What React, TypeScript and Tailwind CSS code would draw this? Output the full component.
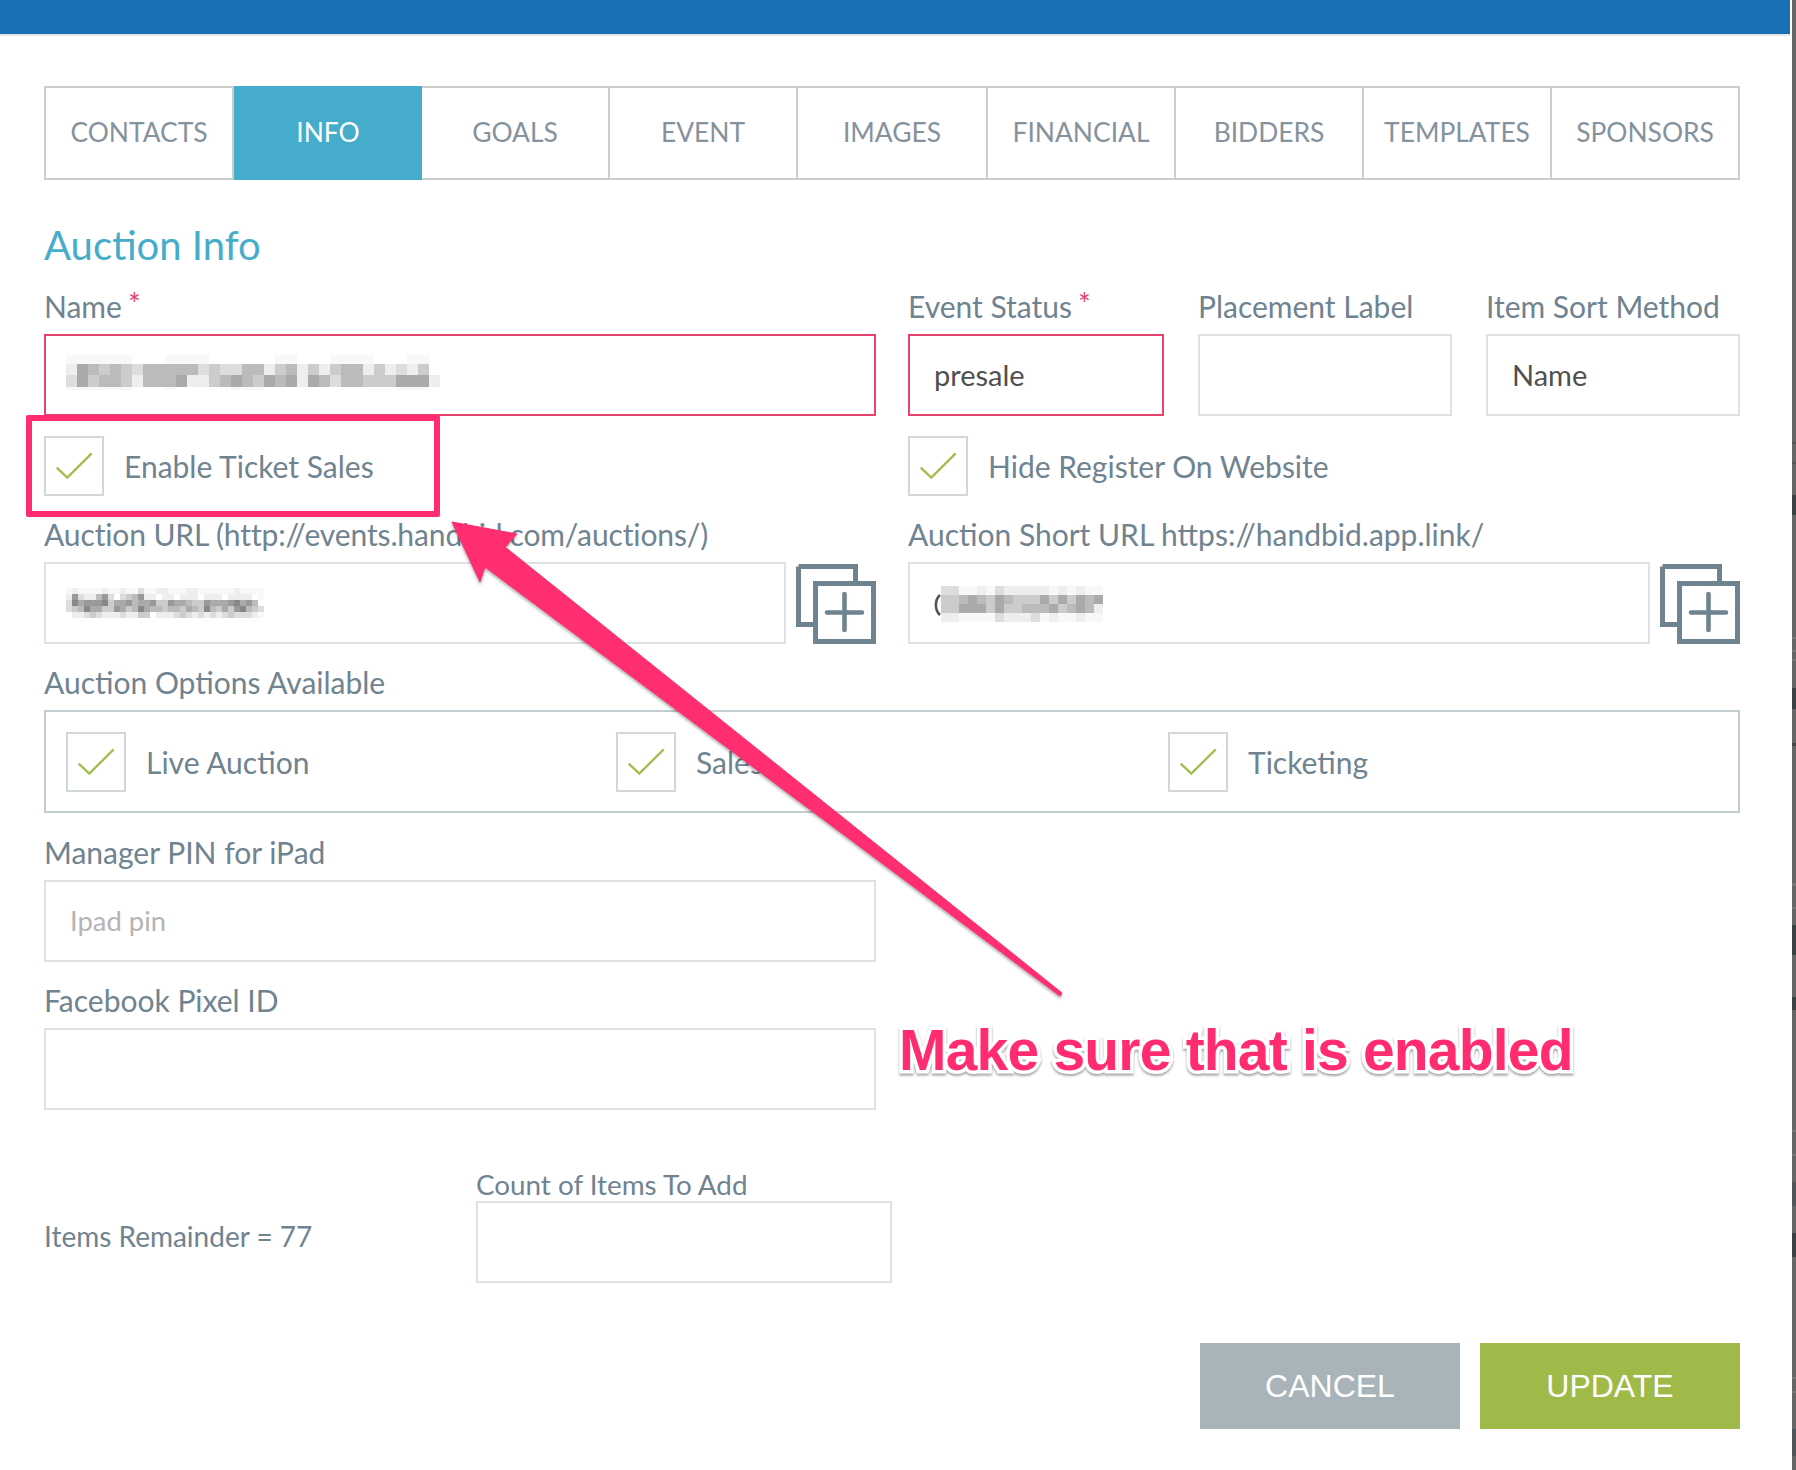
import React from "react";

const tabs = ["CONTACTS", "INFO", "GOALS", "EVENT", "IMAGES", "FINANCIAL", "BIDDERS", "TEMPLATES", "SPONSORS"];

const stripMarks: [number, number, string][] = [
  [442, 2, "#555"], [462, 2, "#555"], [495, 20, "#3c4144"], [637, 2, "#777"], [650, 2, "#777"], [659, 2, "#777"],
  [688, 21, "#3c4144"], [743, 3, "#444"], [883, 3, "#777"], [907, 2, "#777"], [925, 30, "#3c4144"], [997, 13, "#3c4144"],
  [1130, 2, "#777"], [1154, 2, "#777"], [1182, 24, "#50565a"], [1233, 24, "#3c4144"], [1377, 2, "#777"], [1391, 2, "#777"],
  [1429, 27, "#50565a"],
];

function Pixels({ rows, cw, ch, heights }: { rows: string[]; cw: number; ch: number; heights?: number[] }) {
  const width = rows[0].length * cw;
  let y = 0;
  const cells: React.ReactNode[] = [];
  rows.forEach((row, r) => {
    const h = heights ? heights[r] : ch;
    row.split("").forEach((d, c) => {
      const v = d === "z" ? 248 : parseInt(d, 16) * 17;
      if (v < 255) cells.push(<rect key={`${r}-${c}`} x={c * cw} y={y} width={cw} height={h} fill={`rgb(${v},${v},${v})`} />);
    });
    y += h;
  });
  return (
    <svg width={width} height={y} viewBox={`0 0 ${width} ${y}`} shapeRendering="crispEdges" className="block">
      {cells}
    </svg>
  );
}

function Label({ children, req, className = "" }: { children: React.ReactNode; req?: boolean; className?: string }) {
  return (
    <div className={`h-[44px] text-[30px] leading-[32px] text-[#6f8390] whitespace-nowrap ${className}`}>
      {children}
      {req && <span className="relative -top-[3px] ml-[6px] text-[#e8426f] text-[30px] leading-none">*</span>}
    </div>
  );
}

function Field({ value, placeholder, error, size = "text-[29px]", className = "" }: { value?: string; placeholder?: string; error?: boolean; size?: string; className?: string }) {
  return (
    <input
      readOnly
      defaultValue={value}
      placeholder={placeholder}
      className={`block h-[82px] w-full bg-white border-2 pl-[24px] pb-[2px] ${size} text-[#505050] placeholder:text-[#b4b4b4] outline-none ${error ? "border-[#e8426f]" : "border-[#dde1e5]"} ${className}`}
    />
  );
}

function Check({ label }: { label: string }) {
  return (
    <div className="flex items-center gap-[20px] h-[60px]">
      <div className="w-[60px] h-[60px] border-2 border-[#d2d7db] shrink-0">
        <svg width="56" height="56" viewBox="0 0 56 56" className="block">
          <path d="M10.7 29.7 L21.3 39.7 L45.7 15.3" fill="none" stroke="#a3bd52" strokeWidth="2.4" />
        </svg>
      </div>
      <span className="text-[30px] text-[#6f8390] whitespace-nowrap">{label}</span>
    </div>
  );
}

function CopyIcon() {
  return (
    <svg width="80" height="80" viewBox="0 0 80 80" className="block shrink-0">
      <path d="M2.5 2.5 H59.5 V19 M19 60.5 H2.5 V2.5" fill="none" stroke="#6f8390" strokeWidth="5" />
      <rect x="19.5" y="19.5" width="58" height="58" fill="white" stroke="#6f8390" strokeWidth="5" />
      <path d="M48.5 30 V66 M31 48.5 H66" stroke="#6f8390" strokeWidth="4.6" strokeLinecap="round" />
    </svg>
  );
}

export default function App() {
  return (
    <div className="relative w-[1796px] h-[1470px] bg-white flex overflow-hidden font-['Lato',sans-serif]">
      <div className="w-[1790px] shrink-0">
        <div className="h-[36px] bg-[#1a70b3] border-b-2 border-[#e4e6e8]" />
        <div className="pl-[44px] pr-[50px] pt-[50px]">
          <div className="grid grid-cols-[190px_188px_188px_188px_190px_188px_188px_188px_188px] h-[94px]">
            {tabs.map((t, i) => (
              <div
                key={t}
                className={`flex items-center justify-center text-[26.4px] ${
                  t === "INFO"
                    ? "bg-[#45adcb] text-white"
                    : `border-y-2 border-[#cccccc] text-[#84929e] ${i === 0 || i > 1 ? "border-r-2" : ""} ${i === 0 ? "border-l-2" : ""}`
                }`}
              >
                {t}
              </div>
            ))}
          </div>

          <h1 className="mt-[41px] h-[48px] text-[40px] leading-[48px] font-normal text-[#45adcb]">Auction Info</h1>

          <div className="mt-[21px] grid grid-cols-[832px_832px] gap-x-[32px]">
            <div>
              <Label req>Name</Label>
              <div className="h-[82px] border-2 border-[#e8426f] pl-[20px] pt-[19px]">
                <Pixels
                  cw={11}
                  ch={11}
                  heights={[9, 11, 12, 3]}
                  rows={[
                    "zzzzzzfffzzzzffffffzzfffzzzzfffzzf",
                    "eabcbcdbbbbbdcddbbecbececbbecedecf",
                    "dacbbcebbbaeecbabcabaeabdbbcccaaae",
                    "zzzzzzfffzfffffzzzffffffffffffzzzf",
                  ]}
                />
              </div>
            </div>
            <div className="grid grid-cols-[256px_254px_254px] gap-x-[34px]">
              <div>
                <Label req>Event Status</Label>
                <Field value="presale" error />
              </div>
              <div>
                <Label>Placement Label</Label>
                <Field />
              </div>
              <div>
                <Label>Item Sort Method</Label>
                <Field value="Name" />
              </div>
            </div>
          </div>

          <div className="mt-[20px] grid grid-cols-[832px_832px] gap-x-[32px]">
            <Check label="Enable Ticket Sales" />
            <Check label="Hide Register On Website" />
          </div>

          <div className="mt-[23px] grid grid-cols-[832px_832px] gap-x-[32px]">
            <div>
              <div className="h-[43px] text-[30px] leading-[31px] tracking-[-0.12px] text-[#6f8390] whitespace-nowrap">Auction URL (http://events.handbid.com/auctions/)</div>
              <div className="flex items-end justify-between">
                <div className="w-[742px] h-[82px] border-2 border-[#dde1e5] pl-[20px] pt-[24px]">
                  <Pixels
                    cw={6}
                    ch={6}
                    rows={[
                      "zezzzzezzezzdzzeezzzeezzzzzzezzzz",
                      "e9deeb9dfdcb9eefeefeeefeeefeeeefz",
                      "d8a9998caa9baa9cc9aabcc9aaa98a9b",
                      "dcb8aacc9acb8abbcbbcabc8bcac98bcd",
                      "feedcdeeedeeccfeeedcdedededcdddez",
                    ]}
                  />
                </div>
                <CopyIcon />
              </div>
            </div>
            <div>
              <div className="h-[43px] text-[30px] leading-[31px] text-[#6f8390] whitespace-nowrap">Auction Short URL https://handbid.app.link/</div>
              <div className="flex items-end justify-between">
                <div className="w-[742px] h-[82px] border-2 border-[#dde1e5] pl-[29px] pt-[22px] flex">
                  <svg width="7" height="36" viewBox="0 0 7 36" className="block -ml-[5px] shrink-0">
                    <path d="M6 9 C0.5 14 0.5 24 6 29" fill="none" stroke="#555" strokeWidth="2.6" />
                  </svg>
                  <Pixels
                    cw={9}
                    ch={9}
                    rows={["ddzzezdeeeeezezezz", "ccbabcabcccacacaba", "ccaaacaccbbbacbabe", "eezzzzdeeedzezzezz"]}
                  />
                </div>
                <CopyIcon />
              </div>
            </div>
          </div>

          <Label className="mt-[22px]">Auction Options Available</Label>
          <div className="h-[103px] border-2 border-[#c3ccd0] pl-[20px] pt-[20px] grid grid-cols-[550px_552px_1fr] grid-rows-[60px]">
            <Check label="Live Auction" />
            <Check label="Sales" />
            <Check label="Ticketing" />
          </div>

          <Label className="mt-[23px]">Manager PIN for iPad</Label>
          <Field placeholder="Ipad pin" size="text-[27.4px]" className="w-[832px] max-w-[832px]" />

          <Label className="mt-[22px]">Facebook Pixel ID</Label>
          <Field className="w-[832px] max-w-[832px]" />

          <div className="mt-[58px] flex items-end">
            <div className="w-[432px] h-[82px] flex items-center pb-[12px] text-[28px] text-[#6f8390]">Items Remainder = 77</div>
            <div className="w-[416px]">
              <div className="h-[33px] text-[27.8px] leading-[33px] text-[#6f8390] whitespace-nowrap">Count of Items To Add</div>
              <Field />
            </div>
          </div>

          <div className="mt-[60px] flex justify-end gap-[20px] font-['Liberation_Sans',sans-serif]">
            <button className="w-[260px] h-[86px] bg-[#a9b4ba] text-white text-[32px]">CANCEL</button>
            <button className="w-[260px] h-[86px] bg-[#a0ba4a] text-white text-[32px]">UPDATE</button>
          </div>
        </div>
      </div>
      <div className="ml-[2px] w-[4px] bg-[#666666]">
        <svg width="4" height="1470" viewBox="0 0 4 1470" className="block">
          {stripMarks.map(([y, h, c]) => (
            <rect key={y} x="0" y={y} width="4" height={h} fill={c} />
          ))}
        </svg>
      </div>

      <div className="absolute left-[26px] top-[415px] w-[414px] h-[102px] border-[6px] border-[#ff2d6f] rounded-[2px]" />
      <svg width="1796" height="1470" viewBox="0 0 1796 1470" className="absolute left-0 top-0 pointer-events-none">
        <defs>
          <filter id="s" x="-5%" y="-5%" width="110%" height="110%">
            <feDropShadow dx="0" dy="2" stdDeviation="1.5" floodColor="#000" floodOpacity="0.35" />
          </filter>
        </defs>
        <path
          d="M452 522 L517 534 L505 547 L1062 993 L1060 996 L485 567 L480 582 Z"
          fill="#ff2d6f"
          stroke="#ff2d6f"
          strokeWidth="1"
          strokeLinejoin="round"
          filter="url(#s)"
        />
      </svg>
      <div className="absolute left-[899px] top-[1017px] text-[57px] leading-[66px] tracking-[-0.8px] font-bold font-['Liberation_Sans',sans-serif] whitespace-nowrap text-[#ff2d6f] [-webkit-text-stroke:7px_white] [paint-order:stroke_fill] drop-shadow-[0_2px_1px_rgba(0,0,0,0.35)]">
        Make sure that is enabled
      </div>
    </div>
  );
}
